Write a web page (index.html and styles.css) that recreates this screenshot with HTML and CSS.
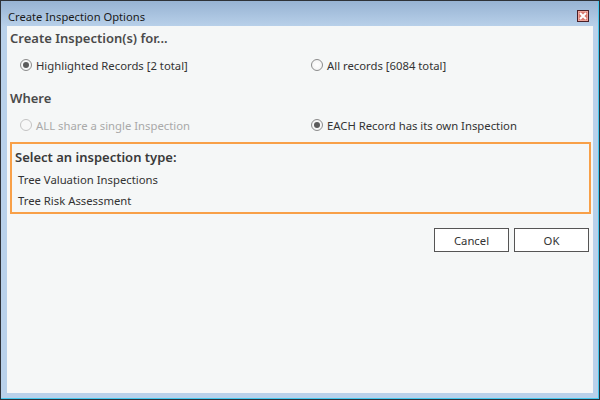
FILE: index.html
```html
<!DOCTYPE html>
<html>
<head>
<meta charset="utf-8">
<link rel="stylesheet" href="styles.css">
</head>
<body>
<div class="window">
  <div class="titlebar">
    <span class="title">Create Inspection Options</span>
    <span class="close"><svg width="8" height="8" viewBox="0 0 8 8"><path d="M1 1 L7 7 M7 1 L1 7" stroke="#ffffff" stroke-width="2"/></svg></span>
  </div>
  <div class="panel">
    <div class="heading h1">Create Inspection(s) for...</div>
    <div class="radiorow r1">
      <label class="radio"><span class="dot checked"></span>Highlighted Records [2 total]</label>
      <label class="radio"><span class="dot"></span>All records [6084 total]</label>
    </div>
    <div class="heading h2">Where</div>
    <div class="radiorow r2">
      <label class="radio disabled"><span class="dot"></span>ALL share a single Inspection</label>
      <label class="radio"><span class="dot checked"></span>EACH Record has its own Inspection</label>
    </div>
    <div class="typebox">
      <div class="typehead">Select an inspection type:</div>
      <div class="typeitem">Tree Valuation Inspections</div>
      <div class="typeitem">Tree Risk Assessment</div>
    </div>
    <div class="buttons">
      <button class="btn">Cancel</button>
      <button class="btn">OK</button>
    </div>
  </div>
</div>
</body>
</html>
```
FILE: styles.css
```css
html, body {
  margin: 0;
  padding: 0;
}
body {
  font-family: "Noto Sans", "Open Sans", sans-serif;
  font-size: 11.3px;
  color: #333333;
}
.window {
  box-sizing: border-box;
  width: 600px;
  height: 400px;
  border: 1px solid #2e3238;
  background: linear-gradient(to bottom, #97b3d3 0px, #b9d1ea 26px, #b9d1ea 100%);
  box-shadow: inset -1px -1px 0 #45c8ee;
  display: flex;
  flex-direction: column;
  padding: 0 6px 6px 6px;
}
.titlebar {
  height: 25px;
  display: flex;
  justify-content: space-between;
  align-items: flex-start;
  margin-right: -6px;
}
.title {
  margin-top: 8px;
  margin-left: 1px;
  line-height: 16px;
  font-size: 11.2px;
  color: #1a1a1a;
}
.close {
  box-sizing: border-box;
  width: 12px;
  height: 12px;
  margin-top: 9px;
  margin-right: 10px;
  border: 1px solid #4a2028;
  background: #d9786e;
  box-shadow: inset 0 0 0 1px #eea59b;
  display: flex;
  align-items: center;
  justify-content: center;
}
.close svg {
  display: block;
}
.panel {
  flex: 1;
  background: #f5f7f7;
  padding: 0 2px 0 3px;
}
.heading {
  font-size: 13px;
  font-weight: 600;
  color: #4a4a4a;
  line-height: 24px;
}
.h2 {
  margin-top: 11px;
}
.radiorow {
  display: grid;
  grid-template-columns: 291px 1fr;
  height: 20px;
  align-items: center;
  padding-left: 10px;
  margin-top: 5px;
}
.radio {
  display: flex;
  align-items: center;
  gap: 4px;
  color: #333333;
}
.radio.disabled {
  color: #a9a9a9;
}
.dot {
  box-sizing: border-box;
  width: 12px;
  height: 12px;
  border-radius: 50%;
  border: 1px solid #8c8c8c;
  background: radial-gradient(circle, #ffffff 0%, #f0f0f0 100%);
  display: flex;
  align-items: center;
  justify-content: center;
}
.disabled .dot {
  border-color: #c4c4c4;
  background: #f7f7f7;
}
.dot.checked::after {
  content: "";
  width: 6px;
  height: 6px;
  border-radius: 50%;
  background: #5b5b5b;
}
.typebox {
  margin: 7px 0 0 0;
  border: 2px solid #f8a048;
  padding: 1px 0 1px 3px;
}
.typehead {
  font-size: 13px;
  font-weight: 600;
  color: #3a3a3a;
  line-height: 24px;
}
.typeitem {
  padding-left: 3px;
  line-height: 21px;
  color: #333333;
}
.buttons {
  display: flex;
  justify-content: flex-end;
  gap: 5px;
  margin: 14px 2px 0 0;
}
.btn {
  box-sizing: border-box;
  width: 75px;
  height: 24px;
  border: 1px solid #555555;
  background: #ffffff;
  font-family: "Noto Sans", "Open Sans", sans-serif;
  font-size: 11.3px;
  color: #333333;
  padding: 0;
}
```
